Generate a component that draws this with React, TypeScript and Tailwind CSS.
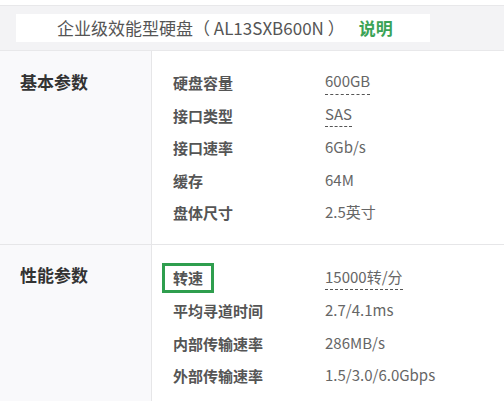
const font = { fontFamily: '"Noto Sans CJK SC", "Noto Sans", sans-serif' }

type Row = { label: string; value: string; dotted?: boolean; boxed?: boolean }

const sections: { title: string; rows: Row[] }[] = [
  {
    title: '基本参数',
    rows: [
      { label: '硬盘容量', value: '600GB', dotted: true },
      { label: '接口类型', value: 'SAS', dotted: true },
      { label: '接口速率', value: '6Gb/s' },
      { label: '缓存', value: '64M' },
      { label: '盘体尺寸', value: '2.5英寸' },
    ],
  },
  {
    title: '性能参数',
    rows: [
      { label: '转速', value: '15000转/分', dotted: true, boxed: true },
      { label: '平均寻道时间', value: '2.7/4.1ms' },
      { label: '内部传输速率', value: '286MB/s' },
      { label: '外部传输速率', value: '1.5/3.0/6.0Gbps' },
    ],
  },
]

export default function App() {
  return (
    <div className="h-[401px] w-[504px] overflow-hidden bg-white" style={font}>
      <div className="mt-[5px] flex h-[46px] items-center border-y border-[#e8e8ea] bg-[#f3f3f5] px-[16px]">
        <div className="flex h-[28px] w-[414px] items-center bg-white pl-[41px]">
          <span className="text-[17px] text-[#555]">企业级效能型硬盘（ AL13SXB600N ）</span>
          <span className="ml-[14px] text-[17px] font-bold text-[#3ba356]">说明</span>
        </div>
      </div>

      {sections.map((s, i) => (
        <div key={s.title} className={`flex ${i > 0 ? 'border-t border-[#e6e6e8]' : ''}`}>
          <div className="w-[152px] shrink-0 border-r border-[#e6e6e8] bg-[#f9f9fb] pl-[20px] pt-[14px]">
            <div className="flex h-[33px] items-center text-[17px] font-bold text-[#333]">{s.title}</div>
          </div>
          <div className={`flex-1 ${i === 0 ? 'pb-[15px] pt-[15px]' : 'pb-[20px] pt-[17px]'}`}>
            {s.rows.map((r) => (
              <div key={r.label} className="flex h-[32.5px] items-center">
                <div className="w-[173px] shrink-0 pl-[21px]">
                  <span
                    className={`inline-block text-[15px] font-bold text-[#555] ${
                      r.boxed ? '-ml-[11px] border-[3px] border-[#2f9e4e] px-[8px] py-[1px]' : ''
                    }`}
                  >
                    {r.label}
                  </span>
                </div>
                <span
                  className={`text-[15px] text-[#666] ${r.dotted ? 'border-b border-dashed border-[#555] pb-[1px]' : ''}`}
                >
                  {r.value}
                </span>
              </div>
            ))}
          </div>
        </div>
      ))}
    </div>
  )
}
